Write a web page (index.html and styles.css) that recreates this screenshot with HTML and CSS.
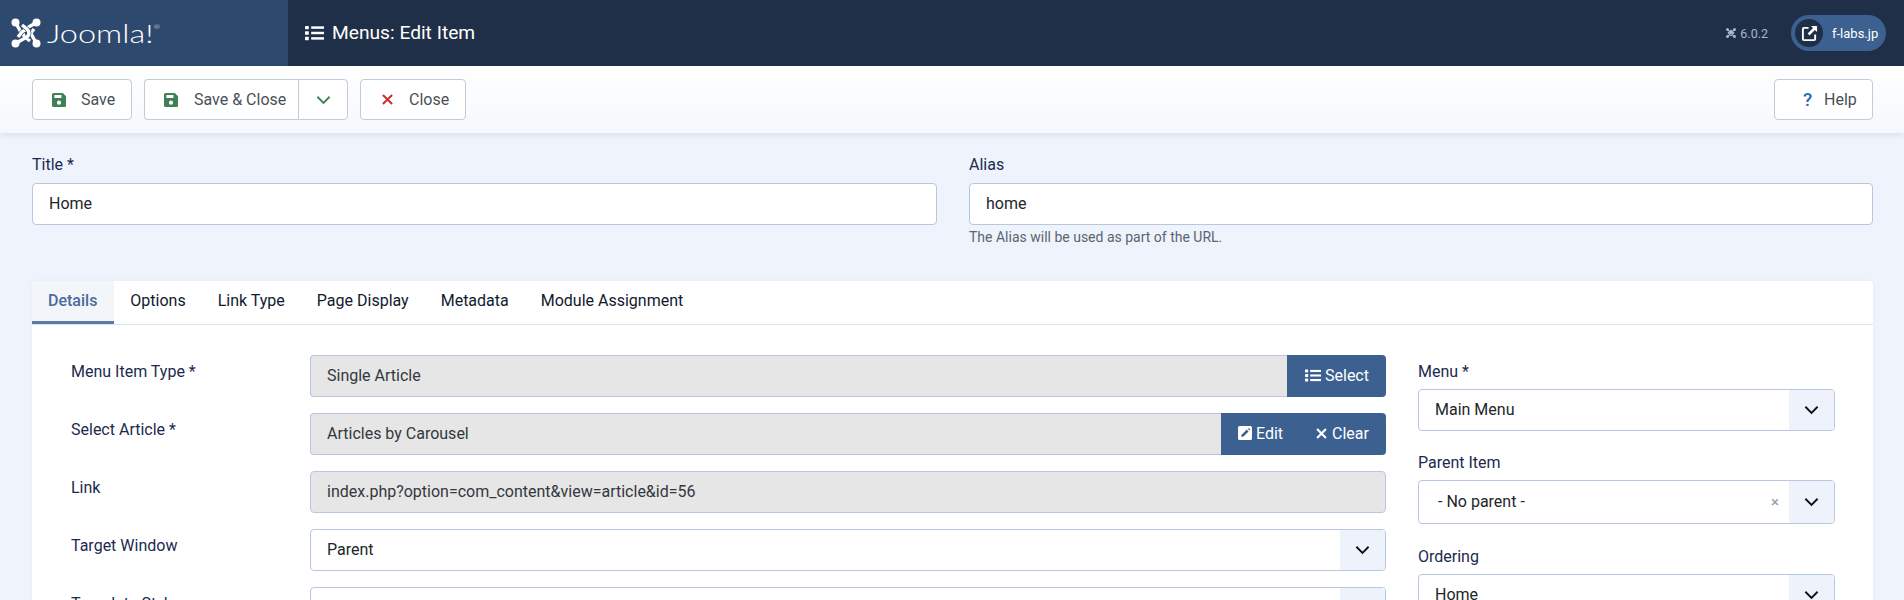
FILE: index.html
```html
<!DOCTYPE html>
<html lang="en">
<head>
<meta charset="utf-8">
<title>Menus: Edit Item</title>
<link rel="stylesheet" href="styles.css">
</head>
<body>
<header class="topbar">
  <a class="brand">
    <svg class="brand-mark" viewBox="0 0 30 30" aria-hidden="true">
      <g fill="none">
        <g><path d="M11 16Q15 20 19 16L23 11" stroke="#2e496e" stroke-width="4.6"/><path d="M4.5 4.5L11 16Q15 20 19 16L23 11" stroke="#fff" stroke-width="3.4"/></g>
        <g transform="rotate(90 15 15)"><path d="M11 16Q15 20 19 16L23 11" stroke="#2e496e" stroke-width="4.6"/><path d="M4.5 4.5L11 16Q15 20 19 16L23 11" stroke="#fff" stroke-width="3.4"/></g>
        <g transform="rotate(180 15 15)"><path d="M11 16Q15 20 19 16L23 11" stroke="#2e496e" stroke-width="4.6"/><path d="M4.5 4.5L11 16Q15 20 19 16L23 11" stroke="#fff" stroke-width="3.4"/></g>
        <g transform="rotate(270 15 15)"><path d="M11 16Q15 20 19 16L23 11" stroke="#2e496e" stroke-width="4.6"/><path d="M4.5 4.5L11 16Q15 20 19 16L23 11" stroke="#fff" stroke-width="3.4"/></g>
      </g>
      <g fill="#fff"><circle cx="4.5" cy="4.5" r="4"/><circle cx="25.5" cy="4.5" r="4"/><circle cx="4.5" cy="25.5" r="4"/><circle cx="25.5" cy="25.5" r="4"/></g>
    </svg>
    <span class="brand-name">Joomla!<sup class="brand-reg">®</sup></span>
  </a>
  <div class="page-title">
    <svg class="icon-list" viewBox="0 0 20 16" aria-hidden="true"><g fill="#fff"><rect x="0" y="0.5" width="4" height="3.6" rx=".6"/><rect x="0" y="6.2" width="4" height="3.6" rx=".6"/><rect x="0" y="11.9" width="4" height="3.6" rx=".6"/><rect x="6.5" y="1" width="13.5" height="2.6"/><rect x="6.5" y="6.7" width="13.5" height="2.6"/><rect x="6.5" y="12.4" width="13.5" height="2.6"/></g></svg>
    <h1>Menus: Edit Item</h1>
  </div>
  <div class="version">
    <svg class="version-mark" viewBox="0 0 30 30" aria-hidden="true">
      <g fill="none" stroke="#a9b6c8" stroke-width="4"><path d="M4 4L26 26M26 4L4 26M7 15L15 7L23 15L15 23Z"/></g>
      <g fill="#a9b6c8"><circle cx="4.5" cy="4.5" r="4.5"/><circle cx="25.5" cy="4.5" r="4.5"/><circle cx="4.5" cy="25.5" r="4.5"/><circle cx="25.5" cy="25.5" r="4.5"/></g>
    </svg>
    <span>6.0.2</span>
  </div>
  <a class="site-pill">
    <span class="site-circle">
      <svg viewBox="0 0 18 18" aria-hidden="true"><path d="M8 3H3.2Q2 3 2 4.2V14.8Q2 16 3.2 16H13.8Q15 16 15 14.8V10" fill="none" stroke="#fff" stroke-width="2"/><path d="M10.5 1H17V7.5L14.7 5.2L9 11L7 9L12.8 3.3Z" fill="#fff"/></svg>
    </span>
    <span class="site-name">f-labs.jp</span>
  </a>
</header>

<nav class="toolbar">
  <button class="tbtn tbtn-save">
    <svg class="tico" viewBox="0 0 14 14" aria-hidden="true"><path fill-rule="evenodd" fill="#3f8057" d="M1.5 0H10.8L14 3.2V12.5Q14 14 12.5 14H1.5Q0 14 0 12.5V1.5Q0 0 1.5 0ZM2.4 2V5H9.4V2ZM7 7.6A2.1 2.1 0 1 0 7 11.8A2.1 2.1 0 1 0 7 7.6Z"/></svg>
    <span>Save</span>
  </button>
  <div class="tgroup">
    <button class="tbtn tbtn-main">
      <svg class="tico" viewBox="0 0 14 14" aria-hidden="true"><path fill-rule="evenodd" fill="#3f8057" d="M1.5 0H10.8L14 3.2V12.5Q14 14 12.5 14H1.5Q0 14 0 12.5V1.5Q0 0 1.5 0ZM2.4 2V5H9.4V2ZM7 7.6A2.1 2.1 0 1 0 7 11.8A2.1 2.1 0 1 0 7 7.6Z"/></svg>
      <span>Save &amp; Close</span>
    </button>
    <button class="tbtn tbtn-drop" aria-label="More">
      <svg class="tchev" viewBox="0 0 16 10" aria-hidden="true"><path d="M1.5 1.5L8 8L14.5 1.5" fill="none" stroke="#3f8057" stroke-width="2"/></svg>
    </button>
  </div>
  <button class="tbtn tbtn-close">
    <svg class="tico tico-x" viewBox="0 0 12 12" aria-hidden="true"><path d="M1 1L11 11M11 1L1 11" stroke="#c9302c" stroke-width="2.2" fill="none"/></svg>
    <span>Close</span>
  </button>
  <button class="tbtn tbtn-help">
    <span class="help-mark">?</span>
    <span>Help</span>
  </button>
</nav>

<main class="content">
  <div class="title-row">
    <div class="title-field">
      <label class="lbl">Title *</label>
      <input class="inp" value="Home">
    </div>
    <div class="title-field">
      <label class="lbl">Alias</label>
      <input class="inp" value="home">
      <div class="hint">The Alias will be used as part of the URL.</div>
    </div>
  </div>

  <section class="card">
    <div class="tabs">
      <span class="tab tab-active">Details</span>
      <span class="tab">Options</span>
      <span class="tab">Link Type</span>
      <span class="tab">Page Display</span>
      <span class="tab">Metadata</span>
      <span class="tab">Module Assignment</span>
    </div>
    <div class="card-body">
      <div class="main-col">
        <div class="row">
          <label class="row-lbl">Menu Item Type *</label>
          <div class="ctl">
            <input class="inp inp-ro inp-join" value="Single Article" readonly>
            <button class="act act-select">
              <svg class="act-list" viewBox="0 0 20 16" aria-hidden="true"><g fill="#fff"><rect x="0" y="0.5" width="4" height="3.6" rx=".6"/><rect x="0" y="6.2" width="4" height="3.6" rx=".6"/><rect x="0" y="11.9" width="4" height="3.6" rx=".6"/><rect x="6.5" y="1" width="13.5" height="2.6"/><rect x="6.5" y="6.7" width="13.5" height="2.6"/><rect x="6.5" y="12.4" width="13.5" height="2.6"/></g></svg>Select
            </button>
          </div>
        </div>
        <div class="row">
          <label class="row-lbl">Select Article *</label>
          <div class="ctl">
            <input class="inp inp-ro inp-join" value="Articles by Carousel" readonly>
            <div class="act-pair">
              <button class="act act-edit">
                <svg class="act-ico" viewBox="0 0 14 14" aria-hidden="true"><path fill-rule="evenodd" fill="#fff" d="M1.5 0H12.5Q14 0 14 1.5V12.5Q14 14 12.5 14H1.5Q0 14 0 12.5V1.5Q0 0 1.5 0ZM8.8 3.6L3.4 9V10.8H5.2L10.6 5.4ZM9.7 2.7L11.5 4.5L12 4Q12.4 3.6 12 3.2L11.2 2.4Q10.8 2 10.4 2.2Z"/></svg>Edit
              </button>
              <button class="act act-clear">
                <svg class="act-x" viewBox="0 0 12 12" aria-hidden="true"><path d="M1.2 1.2L10.8 10.8M10.8 1.2L1.2 10.8" stroke="#fff" stroke-width="2.3" fill="none"/></svg>Clear
              </button>
            </div>
          </div>
        </div>
        <div class="row">
          <label class="row-lbl">Link</label>
          <div class="ctl"><input class="inp inp-ro" value="index.php?option=com_content&amp;view=article&amp;id=56" readonly></div>
        </div>
        <div class="row">
          <label class="row-lbl">Target Window</label>
          <div class="ctl">
            <div class="sel"><span class="sel-val">Parent</span><span class="sel-arrow"><svg viewBox="0 0 16 10" aria-hidden="true"><path d="M1.5 1.5L8 8L14.5 1.5" fill="none" stroke="#111" stroke-width="2"/></svg></span></div>
          </div>
        </div>
        <div class="row">
          <label class="row-lbl">Template Style</label>
          <div class="ctl">
            <div class="sel"><span class="sel-val"></span><span class="sel-arrow"><svg viewBox="0 0 16 10" aria-hidden="true"><path d="M1.5 1.5L8 8L14.5 1.5" fill="none" stroke="#111" stroke-width="2"/></svg></span></div>
          </div>
        </div>
      </div>
      <aside class="side-col">
        <div class="side-field">
          <label class="side-lbl">Menu *</label>
          <div class="sel"><span class="sel-val">Main Menu</span><span class="sel-arrow"><svg viewBox="0 0 16 10" aria-hidden="true"><path d="M1.5 1.5L8 8L14.5 1.5" fill="none" stroke="#111" stroke-width="2"/></svg></span></div>
        </div>
        <div class="side-field side-field-parent">
          <label class="side-lbl">Parent Item</label>
          <div class="sel sel-tall"><span class="sel-val sel-val-fancy">- No parent -</span><span class="sel-clear">×</span><span class="sel-arrow"><svg viewBox="0 0 16 10" aria-hidden="true"><path d="M1.5 1.5L8 8L14.5 1.5" fill="none" stroke="#111" stroke-width="2"/></svg></span></div>
        </div>
        <div class="side-field">
          <label class="side-lbl">Ordering</label>
          <div class="sel"><span class="sel-val">Home</span><span class="sel-arrow"><svg viewBox="0 0 16 10" aria-hidden="true"><path d="M1.5 1.5L8 8L14.5 1.5" fill="none" stroke="#111" stroke-width="2"/></svg></span></div>
        </div>
      </aside>
    </div>
  </section>
</main>
</body>
</html>
```
FILE: styles.css
```css
* { box-sizing: border-box; }
html, body { margin: 0; height: 600px; overflow: hidden; }
body { background: #eff4fc; font-family: Roboto, "Liberation Sans", sans-serif; font-size: 16px; color: #22262a; }
button, input { font-family: inherit; font-size: 16px; }

.topbar { display: flex; align-items: center; height: 66px; background: #1f2f48; color: #fff; }
.brand { display: flex; align-items: center; width: 288px; height: 66px; padding-left: 11px; background: #2e496e; flex: none; }
.brand-mark { width: 30px; height: 30px; flex: none; }
.brand-name { margin-left: 6px; font-family: Lato, Roboto, sans-serif; font-weight: 300; font-size: 25px; line-height: 30px; color: #fff; white-space: nowrap; transform: scaleX(1.3); transform-origin: left center; }
.brand-reg { font-size: 6px; line-height: 0; vertical-align: 14px; }
.page-title { display: flex; align-items: center; padding-left: 17px; flex: 1; }
.icon-list { width: 19px; height: 16px; flex: none; }
.page-title h1 { margin: 0 0 0 8px; font-size: 19.2px; font-weight: 400; line-height: 24px; }
.version { display: flex; align-items: center; color: #a9b6c8; font-size: 12.5px; margin-right: 23px; }
.version-mark { width: 10px; height: 10px; margin-right: 4px; }
.site-pill { display: flex; align-items: center; width: 95px; height: 36px; margin-right: 18px; padding-left: 4px; border-radius: 18px; background: #3c6190; }
.site-circle { display: flex; align-items: center; justify-content: center; width: 28px; height: 28px; border-radius: 50%; background: #1f2f48; flex: none; }
.site-circle svg { width: 17px; height: 17px; }
.site-name { margin-left: 9px; font-size: 13px; color: #fff; }

.toolbar { position: relative; display: flex; align-items: center; gap: 12px; height: 67px; padding: 0 31px 0 32px; background: linear-gradient(#fff, #f5f8fc); box-shadow: 0 2px 6px rgba(40, 60, 100, .1); }
.tbtn { display: flex; align-items: center; height: 41px; padding: 0 0 0 19px; border: 1px solid #c3cad8; border-radius: 4px; background: #fff; color: #495057; font-size: 16px; line-height: 24px; white-space: nowrap; flex: none; }
.tbtn-save { width: 100px; }
.tbtn-close { width: 106px; }
.tico { width: 14px; height: 14px; margin-right: 15px; flex: none; }
.tico-x { width: 11px; height: 11px; margin-left: 2px; margin-right: 16px; }
.tgroup { display: flex; }
.tbtn-main { width: 154px; border-radius: 4px 0 0 4px; border-right: 0; }
.tbtn-main .tico { margin-right: 16px; }
.tbtn-drop { width: 50px; padding: 0; justify-content: center; border-radius: 0 4px 4px 0; }
.tchev { width: 15px; height: 10px; }
.tbtn-help { width: 99px; margin-left: auto; padding-left: 28px; }
.help-mark { width: 21px; color: #2a69b8; font-size: 19px; font-weight: 500; text-align: left; }

.content { padding: 20px 31px 0 32px; }
.title-row { display: grid; grid-template-columns: 905px 904px; column-gap: 32px; height: 128px; }
.lbl { display: block; height: 24px; line-height: 24px; margin-bottom: 6px; color: #1b2a4e; }
.inp { display: block; width: 100%; height: 42px; padding: 0 16px 2px; border: 1px solid #b7c7e2; border-radius: 4px; background: #fff; color: #22262a; font-size: 16px; outline: 0; }
.hint { margin-top: 2px; font-size: 14px; line-height: 20px; color: #5a6470; }

.card { background: #fff; border-radius: 4px; box-shadow: 0 0 4px rgba(60, 90, 140, .05); }
.tabs { display: flex; height: 44px; border-bottom: 1px solid #d9e2ef; }
.tab { height: 43px; padding: 0 16px; line-height: 40px; color: #0f1a2e; }
.tab-active { padding-right: 17px; background: #f2f6fa; border-bottom: 3px solid #5b7ba5; color: #4a6a9a; font-weight: 500; border-radius: 4px 0 0 0; }

.card-body { display: grid; grid-template-columns: 1315px 417px; column-gap: 32px; padding: 30px 38px 0 39px; }
.row { display: grid; grid-template-columns: 239px 1076px; margin-bottom: 16px; }
.row-lbl { padding-top: 5px; line-height: 24px; color: #1b2a4e; }
.ctl { display: flex; }
.ctl .sel { flex: 1; }
.inp-ro { background: #e6e6e6; color: #33383d; flex: 1; min-width: 0; }
.inp-join { border-radius: 4px 0 0 4px; border-right: 0; }
.act-select, .act-pair { height: 42px; background: #3c6190; border-radius: 0 4px 4px 0; flex: none; }
.act { display: flex; align-items: center; height: 42px; border: 0; color: #fff; background: #3c6190; font-size: 16px; }
.act-select { width: 99px; padding: 0 0 2px 18px; }
.act-list { width: 16px; height: 13px; margin-right: 4px; }
.act-pair { display: flex; width: 165px; }
.act-edit { width: 78px; padding: 0 0 2px 17px; background: transparent; }
.act-clear { width: 87px; padding: 0 0 2px 17px; background: transparent; }
.act-ico { width: 14px; height: 14px; margin-right: 4px; }
.act-x { width: 11px; height: 11px; margin-right: 5px; }

.sel { display: flex; align-items: center; height: 42px; border: 1px solid #b7c7e2; border-radius: 4px; background: #fff; overflow: hidden; }
.sel-tall { height: 44px; }
.sel-val { flex: 1; padding: 0 0 2px 16px; color: #22262a; }
.sel-val-fancy { padding-left: 19px; }
.sel-clear { margin-right: 10px; color: #9a9a9a; font-size: 15px; }
.sel-arrow { display: flex; align-items: center; justify-content: center; align-self: stretch; width: 45px; background: #eef3fb; flex: none; }
.sel-arrow svg { width: 15px; height: 10px; }

.side-col { padding-top: 5px; }
.side-field { margin-bottom: 20px; }
.side-field-parent { margin-bottom: 21px; }
.side-lbl { display: block; height: 24px; line-height: 24px; margin-bottom: 5px; color: #1b2a4e; }
```
